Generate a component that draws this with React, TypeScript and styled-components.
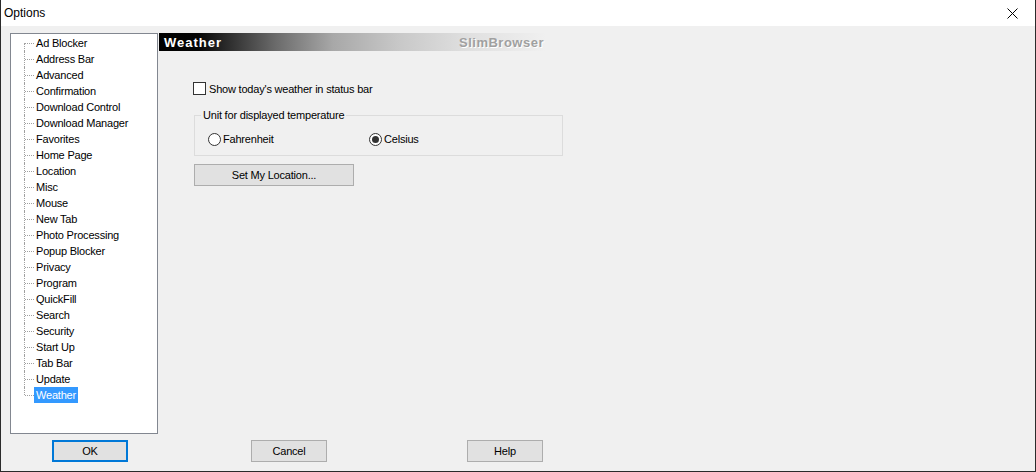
import React from 'react';
import styled, { createGlobalStyle, css } from 'styled-components';

const GlobalStyle = createGlobalStyle`
    html, body {
        margin: 0;
        padding: 0;
        background: #f0f0f0;
    }
    * {
        box-sizing: border-box;
    }
`;

const Window = styled.div`
    width: 1036px;
    height: 472px;
    display: flex;
    flex-direction: column;
    background: #f0f0f0;
    border: 1px solid #2b2b2b;
    border-top: none;
    font-family: "Liberation Sans", Arial, sans-serif;
    font-size: 11px;
    letter-spacing: -0.2px;
    color: #000;
    overflow: hidden;
`;

const TitleBar = styled.div`
    height: 26px;
    background: #fff;
    display: flex;
    align-items: center;
    justify-content: space-between;
    padding: 0 0 0 3px;
    font-size: 12px;
    letter-spacing: 0;
`;

const CloseButton = styled.div`
    width: 46px;
    height: 26px;
    display: flex;
    align-items: center;
    justify-content: center;
`;

const Body = styled.div`
    flex: 1;
    display: flex;
    flex-direction: column;
    padding: 7px 0 0 9px;
`;

const MainRow = styled.div`
    display: flex;
    gap: 1px;
`;

const Tree = styled.ul`
    width: 148px;
    height: 401px;
    margin: 0;
    padding: 1px 0 0;
    list-style: none;
    background: #fff;
    border: 1px solid #828790;
`;

const TreeItem = styled.li`
    height: 16px;
    display: flex;
    align-items: center;
    padding-left: 13px;
`;

const Connector = styled.span<{ $first?: boolean; $last?: boolean }>`
    position: relative;
    width: 10px;
    height: 16px;
    flex: none;
    &:before {
        content: '';
        position: absolute;
        left: 0;
        top: ${p => (p.$first ? '8px' : '0')};
        height: ${p => (p.$first || p.$last ? '8px' : '16px')};
        border-left: 1px dotted #a0a0a0;
    }
    &:after {
        content: '';
        position: absolute;
        left: 1px;
        top: 8px;
        width: 9px;
        border-top: 1px dotted #a0a0a0;
    }
`;

const Label = styled.span<{ $selected?: boolean }>`
    height: 16px;
    line-height: 16px;
    padding: 0 2px;
    white-space: nowrap;
    ${p =>
        p.$selected &&
        css`
            background: #3399ff;
            color: #fff;
        `}
`;

const Panel = styled.div`
    width: 387px;
    display: flex;
    flex-direction: column;
`;

const Header = styled.div`
    height: 18px;
    display: flex;
    align-items: center;
    justify-content: space-between;
    padding: 0 2px 0 5px;
    background: linear-gradient(
        to right,
        #000 0%,
        #050505 10%,
        #6a6a6a 30%,
        #a8a8a8 45%,
        #c8c8c8 62%,
        #e0e0e0 80%,
        #f0f0f0 100%
    );
    font-family: "Liberation Sans", Arial, sans-serif;
    font-weight: bold;
    font-size: 13px;
`;

const HeaderTitle = styled.span`
    color: #fff;
    letter-spacing: 1px;
`;

const HeaderBrand = styled.span`
    color: #a0a0a0;
    letter-spacing: 0.5px;
    text-shadow: 1px 1px 0 #fff;
`;

const Content = styled.div`
    display: flex;
    flex-direction: column;
    align-items: flex-start;
    padding: 30px 0 0 34px;
`;

const CheckRow = styled.label`
    display: flex;
    align-items: center;
    gap: 3px;
    height: 14px;
    line-height: 14px;
    padding-top: 1px;
`;

const CheckBox = styled.span`
    width: 13px;
    height: 13px;
    border: 1px solid #333;
    background: #fff;
`;

const Group = styled.div`
    width: 369px;
    height: 41px;
    margin: 20px 0 0 1px;
    border: 1px solid #dcdcdc;
    display: flex;
    flex-direction: column;
    align-items: flex-start;
`;

const GroupTitle = styled.span`
    height: 13px;
    line-height: 13px;
    margin: -7px 0 0 6px;
    padding: 0 2px;
    background: #f0f0f0;
`;

const RadioGroup = styled.div`
    display: flex;
    margin-top: 10px;
    padding-left: 13px;
`;

const RadioRow = styled.label<{ $width?: number }>`
    display: flex;
    align-items: center;
    gap: 2px;
    height: 14px;
    width: ${p => p.$width ?? 120}px;
`;

const Radio = styled.span<{ $checked?: boolean }>`
    width: 13px;
    height: 13px;
    border-radius: 50%;
    border: 1px solid #333;
    background: #fff;
    display: flex;
    align-items: center;
    justify-content: center;
    &:after {
        content: '';
        width: 7px;
        height: 7px;
        border-radius: 50%;
        background: ${p => (p.$checked ? '#333' : 'transparent')};
    }
`;

const Button = styled.button<{ $width?: number; $default?: boolean; $offset?: number }>`
    width: ${p => p.$width ?? 76}px;
    height: 22px;
    margin: 0 0 0 ${p => p.$offset ?? 0}px;
    padding: 0;
    background: #e1e1e1;
    border: ${p => (p.$default ? '2px solid #0078d7' : '1px solid #adadad')};
    font-family: "Liberation Sans", Arial, sans-serif;
    font-size: 11px;
    letter-spacing: -0.2px;
    color: #000;
`;

const LocationButton = styled(Button)`
    margin-top: 8px;
    margin-left: 1px;
`;

const Footer = styled.div`
    display: flex;
    margin-top: 6px;
`;

const pages = [
    'Ad Blocker',
    'Address Bar',
    'Advanced',
    'Confirmation',
    'Download Control',
    'Download Manager',
    'Favorites',
    'Home Page',
    'Location',
    'Misc',
    'Mouse',
    'New Tab',
    'Photo Processing',
    'Popup Blocker',
    'Privacy',
    'Program',
    'QuickFill',
    'Search',
    'Security',
    'Start Up',
    'Tab Bar',
    'Update',
    'Weather',
];

export default function App() {
    const selected = 'Weather';
    return (
        <>
            <GlobalStyle />
            <Window>
                <TitleBar>
                    <span>Options</span>
                    <CloseButton>
                        <svg width="11" height="11" viewBox="0 0 11 11">
                            <path d="M0.5 0.5 L10.5 10.5 M10.5 0.5 L0.5 10.5" stroke="#000" strokeWidth="1" />
                        </svg>
                    </CloseButton>
                </TitleBar>
                <Body>
                    <MainRow>
                        <Tree>
                            {pages.map((name, i) => (
                                <TreeItem key={name}>
                                    <Connector $first={i === 0} $last={i === pages.length - 1} />
                                    <Label $selected={name === selected}>{name}</Label>
                                </TreeItem>
                            ))}
                        </Tree>
                        <Panel>
                            <Header>
                                <HeaderTitle>Weather</HeaderTitle>
                                <HeaderBrand>SlimBrowser</HeaderBrand>
                            </Header>
                            <Content>
                                <CheckRow>
                                    <CheckBox />
                                    Show today's weather in status bar
                                </CheckRow>
                                <Group>
                                    <GroupTitle>Unit for displayed temperature</GroupTitle>
                                    <RadioGroup>
                                        <RadioRow $width={161}>
                                            <Radio />
                                            Fahrenheit
                                        </RadioRow>
                                        <RadioRow>
                                            <Radio $checked />
                                            Celsius
                                        </RadioRow>
                                    </RadioGroup>
                                </Group>
                                <LocationButton $width={160}>Set My Location...</LocationButton>
                            </Content>
                        </Panel>
                    </MainRow>
                    <Footer>
                        <Button $default $offset={42}>OK</Button>
                        <Button $offset={123}>Cancel</Button>
                        <Button $offset={140}>Help</Button>
                    </Footer>
                </Body>
            </Window>
        </>
    );
}
